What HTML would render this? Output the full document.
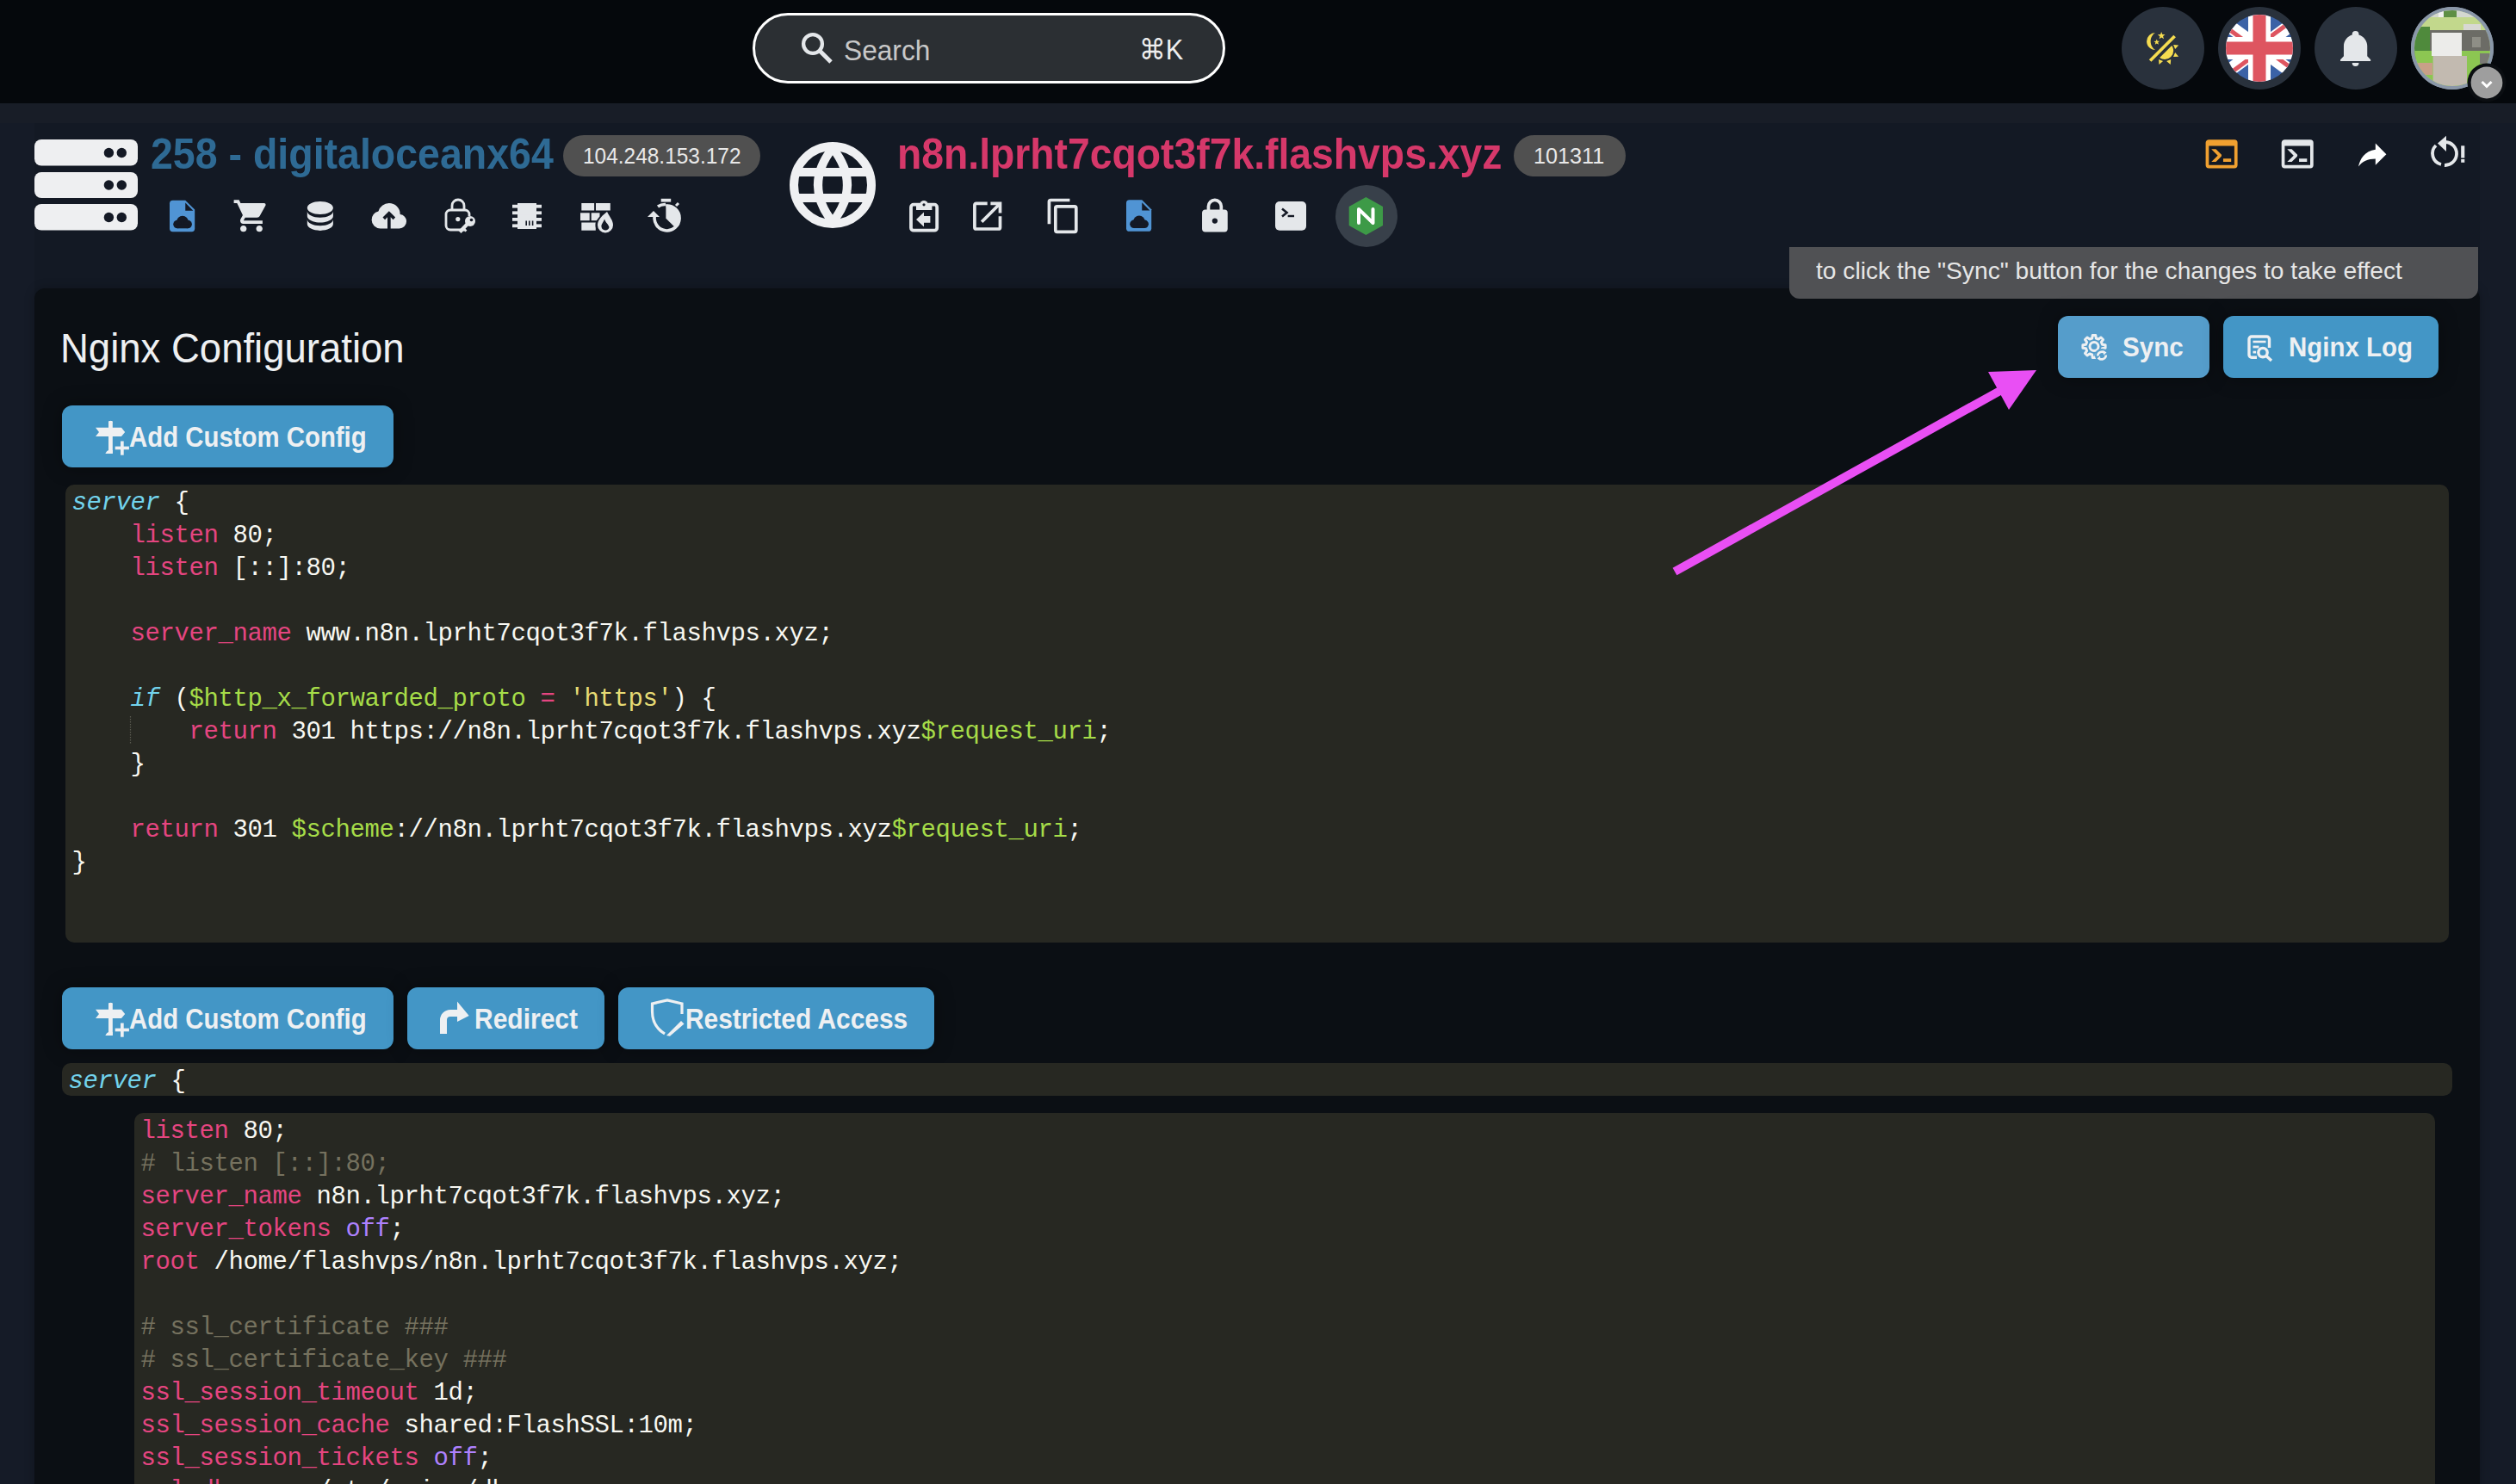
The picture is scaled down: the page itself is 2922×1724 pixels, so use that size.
<!DOCTYPE html>
<html><head><meta charset="utf-8">
<style>
*{box-sizing:border-box;margin:0;padding:0}
html,body{width:2922px;height:1724px;overflow:hidden;background:#151b27;font-family:"Liberation Sans",sans-serif;color:#eef0f2}
.abs{position:absolute}
.t{position:absolute;white-space:pre;transform-origin:0 0;line-height:1}
#hdr{left:0;top:0;width:2922px;height:120px;background:#05080c}
#band{left:0;top:120px;width:2922px;height:23px;background:#181d27}
.search{left:874px;top:15px;width:549px;height:82px;border:3px solid #fff;border-radius:41px;background:#2b2f33}
.hcirc{top:8px;width:96px;height:96px;border-radius:50%;background:#29313c}
.card{left:40px;top:335px;width:2840px;height:1500px;background:#0b0f14;border-radius:12px;box-shadow:0 0 12px rgba(0,0,0,.25)}
.badge{background:#505050;border-radius:24px;color:#e8e8e8}
.btn{background:#4396c6;border-radius:12px;box-shadow:0 0 22px rgba(0,0,0,.35)}
.ed{background:#272822;border-radius:10px}
.code{position:absolute;font-family:"Liberation Mono",monospace;font-size:29px;line-height:38px;letter-spacing:-0.403px;white-space:pre;color:#f8f8f2}
.k{color:#e54580}.i{color:#72d3ec;font-style:italic}.v{color:#a6dc48}.s{color:#e6db74}.n{color:#ae81ff}.c{color:#75715e}
</style></head><body>
<div id="hdr" class="abs"></div>
<div id="band" class="abs"></div>
<div class="abs" style="left:40px;top:143px;width:2840px;height:400px;background:#131924"></div>

<!-- search -->
<div class="abs search"></div>
<div class="t" style="left:980px;top:42px;font-size:33px;color:#c8c8c8;transform:scaleX(0.96)">Search</div>
<div class="t" style="left:1323px;top:41px;font-size:33px;color:#eeeeee;transform:scaleX(0.93)">⌘K</div>

<!-- header circles -->
<div class="abs hcirc" style="left:2464px"></div>
<div class="abs hcirc" style="left:2576px"></div>
<div class="abs hcirc" style="left:2688px"></div>
<div class="abs hcirc" style="left:2800px;background:#8894a4"></div>

<!-- card -->
<div class="abs card"></div>

<!-- server title -->
<div class="t" style="left:175px;top:154px;font-size:50px;font-weight:700;color:#2e6a94;transform:scaleX(0.93)">258 - digitaloceanx64</div>
<div class="abs badge" style="left:654px;top:157px;width:229px;height:48px"></div>
<div class="t" style="left:677px;top:168px;font-size:26px;color:#e8e8e8;transform:scaleX(0.94)">104.248.153.172</div>

<!-- domain title -->
<div class="t" style="left:1042px;top:153.9px;font-size:50px;font-weight:700;color:#d6386a;transform:scaleX(0.926)">n8n.lprht7cqot3f7k.flashvps.xyz</div>
<div class="abs badge" style="left:1758px;top:157px;width:130px;height:48px"></div>
<div class="t" style="left:1781px;top:168px;font-size:26px;color:#e8e8e8;transform:scaleX(0.97)">101311</div>

<!-- tooltip -->
<div class="abs" style="left:2078px;top:287px;width:800px;height:60px;background:#505154;border-radius:0 0 12px 12px"></div>
<div class="t" style="left:2109px;top:301px;font-size:28px;color:#e6e6e6;transform:scaleX(1.007)">to click the "Sync" button for the changes to take effect</div>

<!-- card header -->
<div class="t" style="left:69.5px;top:380.6px;font-size:48px;color:#eef0f2;transform:scaleX(0.948)">Nginx Configuration</div>
<div class="abs btn" style="left:2390px;top:367px;width:176px;height:72px;background:#559dcb"></div>
<div class="abs btn" style="left:2582px;top:367px;width:250px;height:72px"></div>
<div class="t" style="left:2465px;top:387px;font-size:32px;font-weight:700;transform:scaleX(0.925)">Sync</div>
<div class="t" style="left:2658px;top:387px;font-size:32px;font-weight:700;transform:scaleX(0.92)">Nginx Log</div>

<!-- button add custom config 1 -->
<div class="abs btn" style="left:72px;top:471px;width:385px;height:72px"></div>
<div class="t" style="left:150px;top:491px;font-size:33px;font-weight:700;transform:scaleX(0.89)">Add Custom Config</div>

<!-- editor 1 -->
<div class="abs ed" style="left:76px;top:563px;width:2768px;height:532px"></div>
<div class="code" style="left:83.5px;top:565.7px"><span class="i">server</span> {
    <span class="k">listen</span> 80;
    <span class="k">listen</span> [::]:80;

    <span class="k">server_name</span> www.n8n.lprht7cqot3f7k.flashvps.xyz;

    <span class="i">if</span> (<span class="v">$http_x_forwarded_proto</span> <span class="k">=</span> <span class="s">'https'</span>) {
        <span class="k">return</span> 301 https://n8n.lprht7cqot3f7k.flashvps.xyz<span class="v">$request_uri</span>;
    }

    <span class="k">return</span> 301 <span class="v">$scheme</span>://n8n.lprht7cqot3f7k.flashvps.xyz<span class="v">$request_uri</span>;
}</div>

<!-- buttons row 2 -->
<div class="abs btn" style="left:72px;top:1147px;width:385px;height:72px"></div>
<div class="t" style="left:150px;top:1167px;font-size:33px;font-weight:700;transform:scaleX(0.89)">Add Custom Config</div>
<div class="abs btn" style="left:473px;top:1147px;width:229px;height:72px"></div>
<div class="t" style="left:551px;top:1167px;font-size:33px;font-weight:700;transform:scaleX(0.909)">Redirect</div>
<div class="abs btn" style="left:718px;top:1147px;width:367px;height:72px"></div>
<div class="t" style="left:796px;top:1167px;font-size:33px;font-weight:700;transform:scaleX(0.906)">Restricted Access</div>

<!-- editor 2 -->
<div class="abs ed" style="left:72px;top:1235px;width:2776px;height:38px;border-radius:10px"></div>
<div class="code" style="left:79.5px;top:1237.7px"><span class="i">server</span> {</div>
<div class="abs ed" style="left:156px;top:1293px;width:2672px;height:600px"></div>
<div class="code" style="left:163.5px;top:1295.7px"><span class="k">listen</span> 80;
<span class="c"># listen [::]:80;</span>
<span class="k">server_name</span> n8n.lprht7cqot3f7k.flashvps.xyz;
<span class="k">server_tokens</span> <span class="n">off</span>;
<span class="k">root</span> /home/flashvps/n8n.lprht7cqot3f7k.flashvps.xyz;

<span class="c"># ssl_certificate ###</span>
<span class="c"># ssl_certificate_key ###</span>
<span class="k">ssl_session_timeout</span> 1d;
<span class="k">ssl_session_cache</span> shared:FlashSSL:10m;
<span class="k">ssl_session_tickets</span> <span class="n">off</span>;
<span class="k">ssl_dhparam</span> /etc/nginx/dhparam.pem;</div>


<!-- ICONS -->
<svg class="abs" style="left:0;top:0" width="2922" height="1724">
<defs>
<clipPath id="flagc"><circle cx="2624" cy="56" r="39"/></clipPath>
<clipPath id="avc"><circle cx="2848" cy="56" r="44"/></clipPath>
</defs>
<!-- search magnifier -->
<circle cx="944" cy="51" r="10.9" fill="none" stroke="#e4e7ea" stroke-width="4.3"/>
<line x1="952" y1="59" x2="965" y2="72" stroke="#e4e7ea" stroke-width="5"/>

<!-- theme light-dark -->
<g transform="translate(2489.4,34.3) scale(1.83)" fill="#f5dc50">
<path d="M7.5,2C5.71,3.15 4.5,5.18 4.5,7.5C4.5,9.82 5.71,11.85 7.53,13C4.46,13 2,10.54 2,7.5A5.5,5.5 0 0,1 7.5,2M19.07,3.5L20.5,4.93L4.93,20.5L3.5,19.07L19.07,3.5M12.89,5.93L11.41,5L9.97,6L10.39,4.3L9,3.24L10.75,3.12L11.330,1.47L12,3.1L13.73,3.13L12.38,4.26L12.89,5.93M9.59,9.54L8.43,8.81L7.31,9.590L7.65,8.27L6.56,7.44L7.920,7.35L8.37,6.06L8.88,7.33L10.24,7.36L9.19,8.23L9.59,9.54M19,13.5A5.5,5.5 0 0,1 13.5,19C12.28,19 11.15,18.6 10.24,17.93L17.93,10.24C18.6,11.15 19,12.28 19,13.5M14.6,20.08L17.37,18.93L17.13,22.28L14.6,20.08M18.930,17.38L20.08,14.61L22.28,17.15L18.93,17.38M20.08,12.42L18.94,9.64L22.28,9.88L20.08,12.42M9.63,18.93L12.4,20.08L9.87,22.27L9.63,18.93Z"/>
</g>

<!-- UK flag -->
<g clip-path="url(#flagc)">
<rect x="2585" y="17" width="78" height="78" fill="#3b62a6"/>
<g stroke="#ffffff" stroke-width="15"><line x1="2575" y1="20" x2="2673" y2="92"/><line x1="2673" y1="20" x2="2575" y2="92"/></g>
<g stroke="#de5560" stroke-width="5">
<line x1="2575" y1="24" x2="2624" y2="60"/><line x1="2624" y1="52" x2="2673" y2="88"/>
<line x1="2673" y1="16" x2="2624" y2="52"/><line x1="2624" y1="60" x2="2575" y2="96"/>
</g>
<rect x="2611" y="17" width="26" height="78" fill="#fff"/>
<rect x="2585" y="43" width="78" height="26" fill="#fff"/>
<rect x="2616.5" y="17" width="15" height="78" fill="#de5560"/>
<rect x="2585" y="48.5" width="78" height="15" fill="#de5560"/>
</g>

<!-- bell -->
<g transform="translate(2712.2,32.1) scale(1.95)" fill="#e4e7ea">
<path d="M21,19V20H3V19L5,17V11C5,7.9 7.03,5.17 10,4.29C10,4.19 10,4.1 10,4A2,2 0 0,1 12,2A2,2 0 0,1 14,4C14,4.1 14,4.19 14,4.29C16.97,5.17 19,7.9 19,11V17L21,19M14,21A2,2 0 0,1 12,23A2,2 0 0,1 10,21"/>
</g>

<!-- avatar photo -->
<circle cx="2848" cy="56" r="48" fill="#8a97a8"/>
<g clip-path="url(#avc)">
<rect x="2800" y="8" width="96" height="96" fill="#b8d088"/>
<rect x="2800" y="8" width="96" height="13" fill="#d4d8d0"/>
<rect x="2838" y="10" width="15" height="10" fill="#5e8f44"/>
<rect x="2832" y="12" width="6" height="8" fill="#f0f0f0"/>
<rect x="2800" y="20" width="96" height="15" fill="#c2d88c"/>
<rect x="2861" y="28" width="20" height="7" fill="#d8d8d4"/>
<rect x="2818" y="35" width="78" height="24" fill="#6c6c66"/>
<rect x="2871" y="43" width="10" height="12" fill="#8e8e86"/>
<rect x="2800" y="31" width="22" height="38" fill="#4f8a3c"/>
<rect x="2800" y="59" width="96" height="45" fill="#8cc652"/>
<rect x="2824" y="38" width="35" height="27" fill="#ececea"/>
<rect x="2825.6" y="65" width="39.4" height="40" fill="#c2bab0"/>
<rect x="2806" y="73" width="19" height="14" fill="#c8a088"/>
<rect x="2880" y="62" width="12" height="12" fill="#7a7a74"/>
</g>
<circle cx="2888" cy="96" r="22.5" fill="#0b0e12"/>
<circle cx="2888" cy="96" r="18.4" fill="#9e9e9e"/>
<polyline points="2882.5,95 2888,100.5 2893.5,95" fill="none" stroke="#fff" stroke-width="3"/>

<!-- server stack icon -->
<g fill="#eeeff1">
<rect x="40" y="162" width="120" height="30.5" rx="8"/>
<rect x="40" y="200" width="120" height="30" rx="8"/>
<rect x="40" y="237" width="120" height="30.5" rx="8"/>
</g>
<g fill="#141925">
<circle cx="126.4" cy="177.5" r="5.7"/><circle cx="141.3" cy="177.5" r="5.7"/>
<circle cx="126.4" cy="215" r="5.7"/><circle cx="141.3" cy="215" r="5.7"/>
<circle cx="126.4" cy="252.5" r="5.7"/><circle cx="141.3" cy="252.5" r="5.7"/>
</g>

<!-- file-cloud blue (server) -->
<g transform="translate(189.7,229) scale(1.825)">
<path d="M6,2H14L20,8V20A2,2 0 0,1 18,22H6A2,2 0 0,1 4,20V4A2,2 0 0,1 6,2Z" fill="#5094d4"/>
<path d="M14,3.6V8.6H19Z" fill="#141925"/>
<g fill="#141925"><circle cx="12.2" cy="15.6" r="3.7"/><circle cx="8.9" cy="17.3" r="2.6"/><circle cx="15.6" cy="17.3" r="2.6"/><rect x="8.9" y="17.3" width="6.7" height="2.6"/></g>
</g>
<!-- cart -->
<g transform="translate(269.75,228.6) scale(1.85)" fill="#e4e7ea">
<path d="M17,18C15.89,18 15,18.89 15,20A2,2 0 0,0 17,22A2,2 0 0,0 19,20C19,18.89 18.1,18 17,18M1,2V4H3L6.6,11.59L5.24,14.04C5.09,14.32 5,14.65 5,15A2,2 0 0,0 7,17H19V15H7.42A0.25,0.25 0 0,1 7.17,14.75C7.17,14.7 7.18,14.66 7.2,14.63L8.1,13H15.55C16.3,13 16.96,12.58 17.3,11.97L20.88,5.5C20.95,5.34 21,5.17 21,5A1,1 0 0,0 20,4H5.21L4.27,2M7,18C5.89,18 5,18.89 5,20A2,2 0 0,0 7,22A2,2 0 0,0 9,20C9,18.89 8.1,18 7,18Z"/>
</g>
<!-- database -->
<g transform="translate(349.3,228.4) scale(1.88)" fill="#e4e7ea">
<path d="M12,3C7.58,3 4,4.79 4,7C4,9.21 7.58,11 12,11C16.42,11 20,9.21 20,7C20,4.79 16.42,3 12,3M4,9V12C4,14.21 7.58,16 12,16C16.42,16 20,14.21 20,12V9C20,11.21 16.42,13 12,13C7.58,13 4,11.21 4,9M4,14V17C4,19.21 7.58,21 12,21C16.42,21 20,19.21 20,17V14C20,16.21 16.42,18 12,18C7.58,18 4,16.21 4,14Z"/>
</g>
<!-- cloud upload -->
<g transform="translate(429.8,228.7) scale(1.836)" fill="#e4e7ea">
<path d="M11 20H6.5q-2.28 0-3.89-1.57Q1 16.85 1 14.58q0-1.95 1.17-3.48q1.18-1.53 3.08-1.95q.63-2.3 2.5-3.72Q9.63 4 12 4q2.93 0 4.96 2.04Q19 8.07 19 11q1.73.2 2.86 1.5q1.14 1.28 1.14 3q0 1.88-1.31 3.19T18.5 20H13v-7.15l1.6 1.55L16 13l-4-4l-4 4l1.4 1.4l1.6-1.55Z"/>
</g>
<!-- lock-key -->
<g fill="none" stroke="#e4e7ea" stroke-width="2.8">
<path d="M540,267 H523 a5,5 0 0 1 -5,-5 V249 a5,5 0 0 1 5,-5 H540 a5,5 0 0 1 5,5 V251"/>
<path d="M525,244 V239 a7,7 0 0 1 14,0 V244"/>
</g>
<circle cx="531.8" cy="254.6" r="2.6" fill="#e4e7ea"/>
<circle cx="546" cy="257" r="6" fill="#e4e7ea"/><circle cx="547.5" cy="255.5" r="1.8" fill="#141925"/>
<line x1="543" y1="260" x2="534" y2="269.5" stroke="#e4e7ea" stroke-width="4.2"/>
<line x1="539" y1="266" x2="541.5" y2="268.5" stroke="#e4e7ea" stroke-width="2.5"/>
<!-- chip -->
<g fill="#e4e7ea">
<rect x="601" y="236" width="22" height="30"/>
<rect x="595" y="237.8" width="34" height="3.8"/><rect x="595" y="245.4" width="34" height="3.8"/>
<rect x="595" y="253" width="34" height="3.8"/><rect x="595" y="260.4" width="34" height="3.8"/>
</g>
<g fill="#141925"><rect x="610.4" y="256.5" width="1.6" height="5.5"/><rect x="614" y="256.5" width="1.6" height="5.5"/><rect x="617.8" y="256.5" width="1.6" height="5.5"/></g>
<!-- wall fire -->
<g fill="#e4e7ea">
<rect x="675.3" y="236" width="14.8" height="8.5"/><rect x="692" y="236" width="16.8" height="8.5"/>
<rect x="674" y="247.3" width="10.7" height="8.9"/><rect x="686.7" y="247.3" width="9.8" height="8.9"/>
<rect x="675.3" y="258.5" width="16.5" height="9.2"/>
</g>
<path d="M705.3,245 C699,249 691.5,254.5 691.5,261.5 a11.5,11.5 0 0 0 23,0 C714.5,255.5 710,251 705.3,245Z" fill="#141925"/>
<path d="M705,246 C700,250 694,255 694,261.5 a9,9 0 0 0 18,0 C712,256 708,252 705,246Z" fill="#e4e7ea"/>
<path d="M702,254.5 C701,258 698,260.5 698.5,263.5 a4.6,4.6 0 0 0 9,0.5 C707,261 703.5,259 702,254.5Z" fill="#141925"/>
<!-- timer refresh -->
<rect x="767.7" y="230.8" width="11.5" height="3.8" fill="#e4e7ea"/>
<line x1="785" y1="239" x2="788" y2="236" stroke="#e4e7ea" stroke-width="3"/>
<path d="M773.4,253.7 V237.5 A16.2,16.2 0 0 1 785,265.2 Z" fill="#e4e7ea"/>
<path d="M760.5,250 A14.5,14.5 0 1 0 773.4,239" fill="none" stroke="#e4e7ea" stroke-width="3.6"/>
<path d="M752,252 L759,245 L766,252 Z" fill="#e4e7ea"/>
<path d="M764,240 A14,14 0 0 1 773,237.5" fill="none" stroke="#e4e7ea" stroke-width="3.6"/>

<!-- globe -->
<g fill="none" stroke="#eff0f2" stroke-width="10">
<circle cx="967" cy="215" r="45"/>
<path d="M967,172 Q933,215 967,258 Q1001,215 967,172" stroke-linejoin="round"/>
</g>
<g fill="#eff0f2"><rect x="922" y="195" width="90" height="10"/><rect x="922" y="225" width="90" height="10"/></g>

<!-- clipboard arrow left -->
<g fill="none" stroke="#e4e7ea" stroke-width="3.8">
<rect x="1058" y="237.7" width="30.2" height="30" rx="3"/>
</g>
<rect x="1064" y="238" width="18.4" height="6" fill="#e4e7ea"/>
<circle cx="1073" cy="237.5" r="4.6" fill="#e4e7ea"/><circle cx="1073" cy="237.8" r="1.6" fill="#141925"/>
<path d="M1064,255 L1073,246.6 V251 H1080.4 V258.8 H1073 V263.5 Z" fill="#e4e7ea"/>
<!-- open in new -->
<g transform="translate(1124.5,229) scale(1.85)" fill="#e4e7ea">
<path d="M14,3V5H17.59L7.76,14.83L9.17,16.24L19,6.41V10H21V3M19,19H5V5H12V3H5C3.89,3 3,3.9 3,5V19A2,2 0 0,0 5,21H19A2,2 0 0,0 21,19V12H19V19Z"/>
</g>
<!-- copy -->
<g transform="translate(1212.9,228.8) scale(1.845)" fill="#e4e7ea">
<path d="M19,21H8V7H19M19,5H8A2,2 0 0,0 6,7V21A2,2 0 0,0 8,23H19A2,2 0 0,0 21,21V7A2,2 0 0,0 19,5M16,1H4A2,2 0 0,0 2,3V17H4V3H16V1Z"/>
</g>
<!-- file-cloud blue (domain) -->
<g transform="translate(1300.7,228.7) scale(1.825)">
<path d="M6,2H14L20,8V20A2,2 0 0,1 18,22H6A2,2 0 0,1 4,20V4A2,2 0 0,1 6,2Z" fill="#5094d4"/>
<path d="M14,3.6V8.6H19Z" fill="#141925"/>
<g fill="#141925"><circle cx="12.2" cy="15.6" r="3.7"/><circle cx="8.9" cy="17.3" r="2.6"/><circle cx="15.6" cy="17.3" r="2.6"/><rect x="8.9" y="17.3" width="6.7" height="2.6"/></g>
</g>
<!-- lock -->
<g transform="translate(1388.6,228.7) scale(1.857)" fill="#e4e7ea">
<path d="M18,8A2,2 0 0,1 20,10V20A2,2 0 0,1 18,22H6A2,2 0 0,1 4,20V10C4,8.89 4.9,8 6,8H7V6A5,5 0 0,1 12,1A5,5 0 0,1 17,6V8H18M12,3A3,3 0 0,0 9,6V8H15V6A3,3 0 0,0 12,3Z"/>
<circle cx="12" cy="15" r="1.7" fill="#141925"/>
</g>
<!-- console filled -->
<rect x="1481" y="234" width="36" height="33.7" rx="5" fill="#e4e7ea"/>
<polyline points="1489,242.5 1494.5,247 1489,251.5" fill="none" stroke="#141925" stroke-width="2.6"/>
<rect x="1495.6" y="249.8" width="7.4" height="2.4" fill="#141925"/>
<!-- nginx -->
<circle cx="1587" cy="251" r="36" fill="#38404a"/>
<polygon points="1586.4,229 1606,240 1606,262 1586.4,273 1566.7,262 1566.7,240" fill="#3d9a47"/>
<path d="M1578,259 V243 L1594.5,259 V243" fill="none" stroke="#fff" stroke-width="4" stroke-linejoin="round" stroke-linecap="round"/>

<!-- orange console -->
<g transform="translate(2557.9,156.6) scale(1.85)" fill="#f0a030">
<path d="M20,19V7H4V19H20M20,3A2,2 0 0,1 22,5V19A2,2 0 0,1 20,21H4A2,2 0 0,1 2,19V5C2,3.89 2.9,3 4,3H20M13,17V15H18V17H13M9.58,13L5.57,9H8.4L11.7,12.3C12.09,12.69 12.09,13.33 11.7,13.72L8.42,17H5.59L9.58,13Z"/>
</g>
<g transform="translate(2646,156.6) scale(1.85)" fill="#e4e7ea">
<path d="M20,19V7H4V19H20M20,3A2,2 0 0,1 22,5V19A2,2 0 0,1 20,21H4A2,2 0 0,1 2,19V5C2,3.89 2.9,3 4,3H20M13,17V15H18V17H13M9.58,13L5.57,9H8.4L11.7,12.3C12.09,12.69 12.09,13.33 11.7,13.72L8.42,17H5.59L9.58,13Z"/>
</g>
<!-- share -->
<g transform="translate(2733.6,159.4) scale(1.8)" fill="#ffffff">
<path d="M21,11L14,4V8C7,9 4,14 3,19C5.5,15.5 9,13.9 14,13.9V18L21,11Z"/>
</g>
<!-- restart alert -->
<path d="M2840,165 A13,13 0 1 1 2839,192" fill="none" stroke="#e4e7ea" stroke-width="3.8"/>
<path d="M2835,191 A13,13 0 0 1 2829,169" fill="none" stroke="#e4e7ea" stroke-width="3.8"/>
<path d="M2831,166.5 L2841,157.8 V176 Z" fill="#e4e7ea"/>
<rect x="2858.2" y="169.3" width="4.1" height="14.2" fill="#e4e7ea"/>
<rect x="2858.2" y="185" width="4.1" height="3.8" fill="#e4e7ea"/>

<!-- gear sync -->
<g fill="none" stroke="#eef0f2" stroke-width="3" stroke-linejoin="round">
<path d="M2429.7,393.0 L2430.2,389.4 L2433.8,389.4 L2434.3,393.0 L2437.1,394.1 L2440.0,392.0 L2442.5,394.5 L2440.4,397.4 L2441.5,400.2 L2445.1,400.7 L2445.1,404.3 L2441.5,404.8 L2440.4,407.6 L2442.5,410.5 L2440.0,413.0 L2437.1,410.9 L2434.3,412.0 L2433.8,415.6 L2430.2,415.6 L2429.7,412.0 L2426.9,410.9 L2424.0,413.0 L2421.5,410.5 L2423.6,407.6 L2422.5,404.8 L2418.9,404.3 L2418.9,400.7 L2422.5,400.2 L2423.6,397.4 L2421.5,394.5 L2424.0,392.0 L2426.9,394.1Z"/>
<circle cx="2432" cy="402.5" r="5"/>
</g>
<circle cx="2441" cy="413" r="8" fill="#559dcb"/>
<g fill="none" stroke="#eef0f2" stroke-width="2.6">
<path d="M2436.2,413.5 a4.9,4.9 0 0 1 8.5,-3.3"/>
<path d="M2445.8,412.5 a4.9,4.9 0 0 1 -8.5,3.3"/>
</g>
<path d="M2442.5,407 L2446.5,409.5 L2443,412.5Z M2439.5,419 L2435.5,416.5 L2439,413.5Z" fill="#eef0f2"/>
<!-- file search -->
<g fill="none" stroke="#eef0f2" stroke-width="3.4">
<path d="M2621,415.2 H2615 a3,3 0 0 1 -3,-3 V394 a3,3 0 0 1 3,-3 H2632.5 a3,3 0 0 1 3,3 V404"/>
<circle cx="2628" cy="409.6" r="5.2"/>
<line x1="2632" y1="413.5" x2="2638" y2="419"/>
</g>
<g fill="#eef0f2"><rect x="2616.5" y="395.7" width="15" height="2.6"/><rect x="2616.5" y="401.6" width="7" height="2.8"/><rect x="2616.5" y="407.7" width="3.6" height="2.8"/></g>

<!-- signpost plus (btn1) -->
<g id="sp1" fill="#eef0f2">
<rect x="126" y="489" width="4.8" height="38" rx="1"/>
<path d="M126,491 Q128.4,486.5 130.8,491 Z"/>
<path d="M122.3,527 Q124,523.5 126,523 H130.8 V527 Z"/>
<path d="M111,496.8 H141 L145.2,502 L141,507 H111 L115,502 Z"/>
<rect x="133.7" y="518.6" width="16.2" height="3.7"/>
<rect x="140" y="512.5" width="3.7" height="16.2"/>
</g>
<g fill="#eef0f2" transform="translate(0,676)">
<rect x="126" y="489" width="4.8" height="38" rx="1"/>
<path d="M126,491 Q128.4,486.5 130.8,491 Z"/>
<path d="M122.3,527 Q124,523.5 126,523 H130.8 V527 Z"/>
<path d="M111,496.8 H141 L145.2,502 L141,507 H111 L115,502 Z"/>
<rect x="133.7" y="518.6" width="16.2" height="3.7"/>
<rect x="140" y="512.5" width="3.7" height="16.2"/>
</g>
<!-- redirect arrow -->
<path d="M511,1201 V1185 a12,12 0 0 1 12,-12 H531 V1163.4 L544.7,1180 L531,1187 V1181 H523 a4,4 0 0 0 -4,4 V1201 Z" fill="#eef0f2"/>
<!-- shield edit -->
<path d="M772,1201 C762,1195 757.5,1186 757.5,1175 V1166 L775,1162 L792,1166 V1178" fill="none" stroke="#eef0f2" stroke-width="3.2"/>
<path d="M774,1203 L791,1186 L794.5,1189.5 L778,1203.7 Z" fill="#eef0f2"/>

<!-- indent guide -->
<line x1="151.5" y1="832" x2="151.5" y2="864" stroke="#5a5a50" stroke-width="1.2" stroke-dasharray="1.5,1.5"/>
</svg>

<!-- arrow -->
<svg class="abs" style="left:0;top:0" width="2922" height="1724">
<line x1="1945" y1="664" x2="2330" y2="450" stroke="#e94ff4" stroke-width="10"/>
<polygon points="2309,432 2365,430 2333,476" fill="#e94ff4"/>
</svg>
</body></html>
